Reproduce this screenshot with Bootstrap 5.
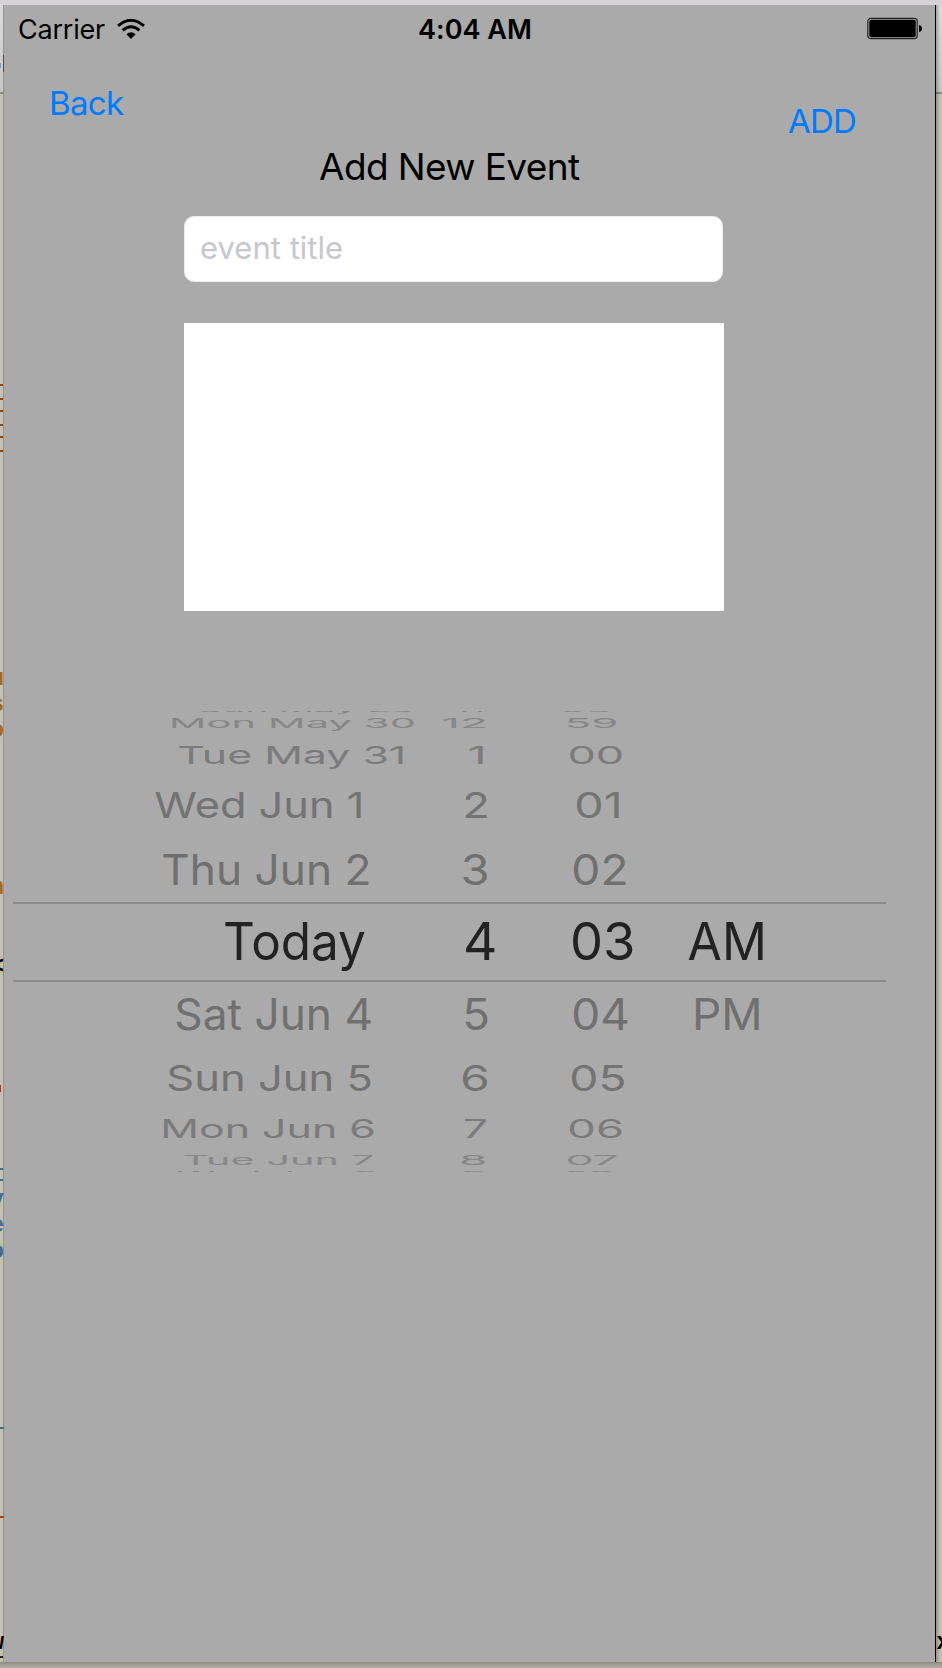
<!DOCTYPE html>
<html lang="en">
<head>
<meta charset="utf-8">
<title>Add New Event</title>
<link href="https://cdn.jsdelivr.net/npm/bootstrap@5.3.0/dist/css/bootstrap.min.css" rel="stylesheet">
<style>
  body { font-family: Inter, "Liberation Sans", sans-serif; width: 942px; height: 1668px; overflow: hidden; background: #c4c1b3; color: #000; }
  .desk { height: 1668px; grid-template-columns: 4px 932px 6px; grid-template-rows: 5px 1657px 6px; background: linear-gradient(#d5d3d7 0 5px, #dcdcdd 5px, #c6c6c6 92px, #888 92px 94px, #c4c1b3 94px); }
  .topbar { grid-column: 1 / 4; background: #d5d2d6; }
  .phone { background: #aaa; border-right: 1px solid #000; grid-column: 2; grid-row: 2; }
  .side { grid-row: 2; overflow: hidden; }
  .side-l { grid-column: 1; box-shadow: inset -1px 0 #96958d; }
  .side-r { grid-column: 3; background: linear-gradient(90deg, rgba(0,0,0,.25), transparent 4px); }
  .side span { position: absolute; right: 0; font: 700 23px/24px "Liberation Mono", monospace; }
  .side i { position: absolute; left: 0; width: 3px; height: 2px; background: #a0410d; }
  .foot { grid-column: 1 / 4; background: linear-gradient(#8e8c82, #b2afa3); }
  .fit { white-space: nowrap; }
  .status { height: 46px; padding: 4px 12px 0 14px; font-size: 27px; line-height: 42px; }
  .link-ios { color: #007aff; font-size: 33px; line-height: 40px; text-decoration: none; }
  .bar { height: 94px; padding: 32px 79px 0 45px; }
  .title { font-size: 37px; line-height: 44px; margin-left: 315px; }
  .field { width: 539px; height: 66px; margin: 27px 0 0 180px; border-radius: 10px; background: #fff; padding: 0 15px; color: #c7c7cd; font-size: 31px; line-height: 62px; border: 1px solid #ededed; }
  .notes { width: 540px; height: 288px; margin: 41px 0 0 180px; background: #fff; }
  .wheel { height: 462px; margin: 99px 0 0 9px; width: 873px; overflow: hidden; clip-path: inset(1px 0 0 0); font-size: 51.5px; color: #707070; }
  .wheel .slot { width: 0; line-height: 0; height: 0; }
  .wheel .slot span { display: inline-block; white-space: nowrap; }
  .selected { position: absolute; left: 0; right: 0; top: 192px; height: 80px; border: solid #898989; border-width: 2px 0; }
</style>
<script src="https://cdn.jsdelivr.net/npm/bootstrap@5.3.0/dist/js/bootstrap.bundle.min.js"></script>
</head>
<body>
<div class="desk d-grid">
  <div class="topbar"></div>
  <div class="side side-l position-relative">
    <i style="top:379px"></i><i style="top:393px"></i><i style="top:405px"></i><i style="top:419px"></i><i style="top:431px"></i><i style="top:445px"></i>
    <i style="top:50px;left:3px;width:1px;height:17px;background:#644"></i><i style="top:58px;width:1px;height:5px;background:#6aa4c2"></i>
    <span style="top:662px;color:#a7691f">u</span><span style="top:688px;color:#a7691f">s</span><span style="top:714px;color:#a7691f">o</span>
    <span style="top:871px;color:#a7691f">n</span><span style="top:950px;color:#000">&lt;</span>
    <i style="top:1080px;height:7px;width:1px;background:#c22"></i>
    <i style="top:1163px;background:#466b91"></i><i style="top:1174px;background:#466b91"></i>
    <span style="top:1183px;color:#466b91">y</span><span style="top:1209px;color:#466b91">e</span><span style="top:1235px;color:#466b91">o</span>
    <i style="top:1422px;width:4px;background:#466b91"></i><i style="top:1511px;width:4px"></i>
    <span style="top:1626px;color:#000">w</span><i style="top:1651px;background:#222"></i>
  </div>

  <main class="phone d-flex flex-column">
    <header class="status d-flex align-items-center justify-content-between">
      <div class="d-flex align-items-center" style="width:390px">
        <span class="fit" data-w="86">Carrier</span>
        <svg style="margin:0 0 1px 12px" width="28" height="21" viewBox="0 0 28 21" fill="none" stroke="#000" stroke-width="2.9"><path d="M1 6.8Q14-4.4 27 6.8M5.6 11.3Q14 4.3 22.4 11.3"/><path d="M14 20 9.4 15.2Q14 11.3 18.6 15.2Z" fill="#000" stroke="none"/></svg>
      </div>
      <span class="fit fw-semibold flex-grow-1 ps-2" data-w="111" style="margin-left:2px">4:04 AM</span>
      <svg style="margin-bottom:2px" width="56" height="24" viewBox="0 0 56 24"><rect x=".8" y="1.3" width="49.4" height="20.4" rx="3" fill="none" stroke="#222" stroke-width="1.2"/><rect x="2.3" y="2.8" width="46.4" height="17.4" rx="2" fill="#000"/><path d="M52 8Q55 8.500 55 11.500T52 15Z"/></svg>
    </header>
    <nav class="bar d-flex justify-content-between align-items-start">
      <a href="#" class="link-ios fit" data-w="73">Back</a>
      <a href="#" class="link-ios fit" data-w="67" style="margin-top:18px">ADD</a>
    </nav>
    <h1 class="title fw-normal mb-0"><span class="fit" data-w="261">Add New Event</span></h1>
    <div class="field"><span class="fit" data-w="141">event title</span></div>
    <div class="notes"></div>
    <section class="wheel position-relative" id="wheel"><div class="selected"></div></section>
  </main>
  <div class="side side-r position-relative"><span style="top:1626px;right:-8px;color:#000">x</span></div>
  <div class="foot"></div>
</div>
<script>
  const ctx = document.createElement('canvas').getContext('2d');
  const ink = (text, font) => { ctx.font = font; const m = ctx.measureText(text); return [-m.actualBoundingBoxLeft, m.actualBoundingBoxRight + m.actualBoundingBoxLeft]; };

  // Wheel rows: baseline, cap height, colour, then [text, left, right] for each column
  const rows = [
    [712, 5, '#858585', ['Sun May 29', 199, 413], ['11', 456, 482], ['58', 562, 610]],
    [728, 10, '#878787', ['Mon May 30', 172, 414], ['12', 443, 485], ['59', 567, 616]],
    [764, 18, '#7b7b7b', ['Tue May 31', 179, 403], ['1', 469, 483], ['00', 570, 622]],
    [818, 26, '#737373', ['Wed Jun 1', 155, 361], ['2', 465, 487], ['01', 577, 619]],
    [885, 31, '#707070', ['Thu Jun 2', 163, 368.5], ['3', 463.5, 487], ['02', 574, 625.5]],
    [960, 37.4, '#222', ['Today', 225, 365], ['4', 466, 495], ['03', 573, 632.5], ['AM', 688.5, 762.5]],
    [1030, 31.5, '#707070', ['Sat Jun 4', 176, 371], ['5', 465, 488], ['04', 574, 628], ['PM', 695.5, 758.5]],
    [1091, 26, '#737373', ['Sun Jun 5', 168, 371], ['6', 463, 487], ['05', 572, 624.5]],
    [1138, 18.5, '#7b7b7b', ['Mon Jun 6', 163.5, 373.5], ['7', 464.5, 486], ['06', 570, 621.5]],
    [1165, 9.7, '#878787', ['Tue Jun 7', 184, 372.5], ['8', 462, 485], ['07', 568, 616.5]],
    [1175, 4, '#858585', ['Wed Jun 8', 177, 376], ['9', 463, 483], ['08', 566, 611]]
  ];
  function layout() {
    document.querySelectorAll('.fit').forEach(el => {
      const s = getComputedStyle(el), t = el.textContent;
      const w = ink(t, s.fontWeight + ' ' + s.fontSize + ' Inter')[1];
      el.style.letterSpacing = (el.dataset.w - w) / (t.length - 1) + 'px';
    });
    const wheel = document.getElementById('wheel');
    wheel.querySelectorAll('.d-flex').forEach(e => e.remove());
    let y = 710;
    for (const [base, cap, color, ...cells] of rows) {
      const row = document.createElement('div');
      row.className = 'd-flex align-items-end';
      row.style.cssText = `height:${base - y}px;color:${color}`;
      y = base;
      for (const [text, l, r] of cells) {
        const [x0, w] = ink(text, '51.5px Inter'), sx = (r - l) / w;
        const slot = document.createElement('div');
        slot.className = 'slot';
        slot.innerHTML = `<span style="transform-origin:0 .3635em;transform:translate(${l - 13 - x0 * sx}px,-.3635em) scale(${sx},${cap / 37.45})">${text}</span>`;
        row.append(slot);
      }
      wheel.append(row);
    }
  }
  layout();
  document.fonts.ready.then(layout);
</script>
</body>
</html>
